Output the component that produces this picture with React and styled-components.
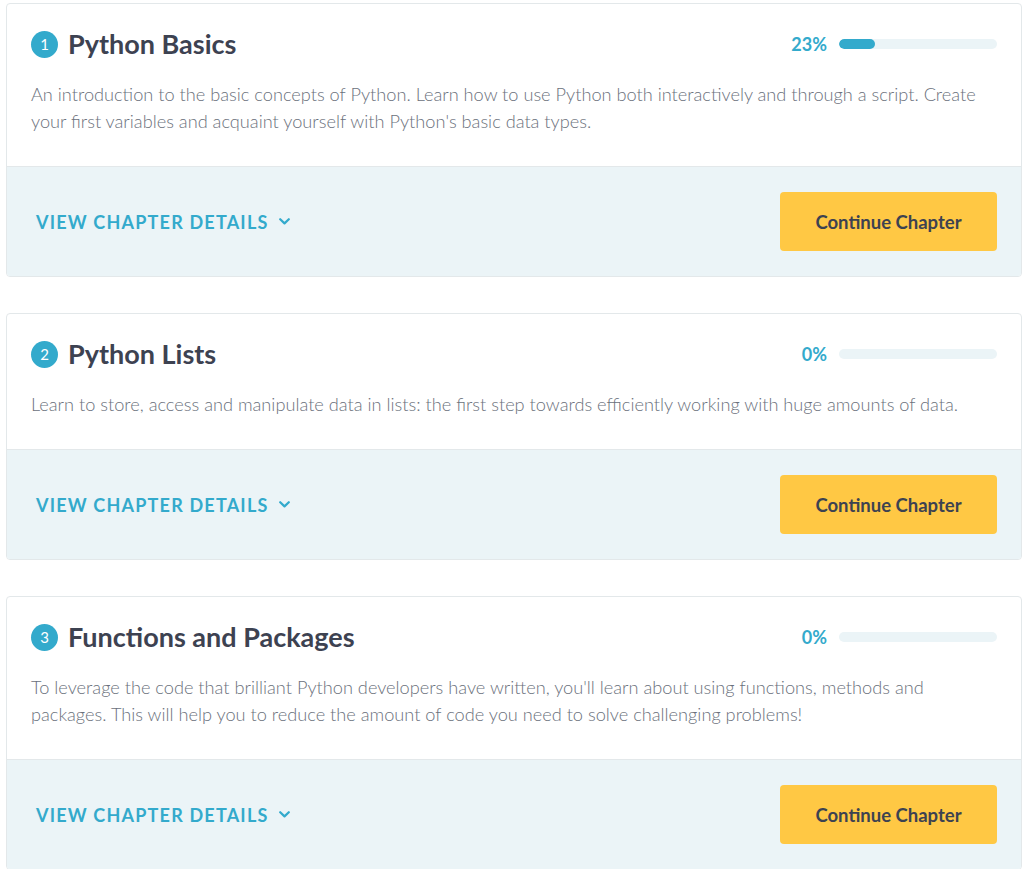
import React from 'react';
import styled, { createGlobalStyle } from 'styled-components';

const GlobalStyle = createGlobalStyle`
  body {
    margin: 0;
    background: #fff;
    font-family: Lato, "Open Sans", sans-serif;
  }
`;

const Page = styled.div`
  padding: 3px 11px 0 6px;
  display: flex;
  flex-direction: column;
  gap: 36px;
`;

const Card = styled.section`
  border: 1px solid #e3e8ea;
  border-radius: 4px;
  overflow: hidden;
  background: #fff;
`;

const Body = styled.div`
  padding: 24px 24px 31px 24px;
`;

const Header = styled.div`
  display: flex;
  align-items: center;
  justify-content: space-between;
`;

const TitleWrap = styled.div`
  display: flex;
  align-items: center;
  gap: 10px;
`;

const Number = styled.span`
  width: 27px;
  height: 27px;
  border-radius: 50%;
  background: #33aacc;
  color: #fff;
  font-size: 15px;
  font-weight: 400;
  display: flex;
  align-items: center;
  justify-content: center;
`;

const Title = styled.h4`
  margin: 0;
  font-size: 27px;
  line-height: 32px;
  font-weight: 700;
  color: #3d4251;
`;

const Progress = styled.div`
  display: flex;
  align-items: center;
  gap: 12px;
`;

const Percent = styled.span`
  font-size: 18px;
  font-weight: 700;
  color: #33aacc;
  min-width: 36px;
  text-align: right;
`;

const Track = styled.div`
  width: 158px;
  height: 10px;
  border-radius: 5px;
  background: #ebf4f7;
  overflow: hidden;
`;

const Fill = styled.div`
  height: 100%;
  border-radius: 5px;
  background: #33aacc;
`;

const Description = styled.p`
  margin: 21px 0 0;
  font-size: 18.2px;
  line-height: 27px;
  font-weight: 300;
  color: #6b717c;
`;

const Footer = styled.div`
  background: #ebf4f7;
  border-top: 1px solid #e3e8ea;
  padding: 25px 24px 25px 29px;
  display: flex;
  align-items: center;
  justify-content: space-between;
`;

const DetailsLink = styled.button`
  background: none;
  border: none;
  padding: 0;
  display: flex;
  align-items: center;
  gap: 10px;
  font-family: inherit;
  font-size: 18px;
  font-weight: 700;
  letter-spacing: 1.2px;
  text-transform: uppercase;
  color: #33aacc;
  cursor: pointer;
`;

const ContinueButton = styled.button`
  width: 217px;
  height: 59px;
  border: none;
  border-radius: 4px;
  background: #ffc844;
  color: #3d4251;
  font-family: inherit;
  font-size: 18.5px;
  font-weight: 700;
  cursor: pointer;
`;

const chapters = [
  {
    n: 1,
    title: 'Python Basics',
    progress: 23,
    text: "An introduction to the basic concepts of Python. Learn how to use Python both interactively and through a script. Create your first variables and acquaint yourself with Python's basic data types.",
  },
  {
    n: 2,
    title: 'Python Lists',
    progress: 0,
    text: 'Learn to store, access and manipulate data in lists: the first step towards efficiently working with huge amounts of data.',
  },
  {
    n: 3,
    title: 'Functions and Packages',
    progress: 0,
    text: "To leverage the code that brilliant Python developers have written, you'll learn about using functions, methods and packages. This will help you to reduce the amount of code you need to solve challenging problems!",
  },
];

function Chevron() {
  return (
    <svg width="11" height="7" viewBox="0 0 11 7" fill="none">
      <path d="M1.2 1.2 L5.5 5.4 L9.8 1.2" stroke="#33aacc" strokeWidth="2.2" strokeLinecap="round" strokeLinejoin="round" />
    </svg>
  );
}

function ChapterCard({ chapter }) {
  return (
    <Card>
      <Body>
        <Header>
          <TitleWrap>
            <Number>{chapter.n}</Number>
            <Title>{chapter.title}</Title>
          </TitleWrap>
          <Progress>
            <Percent>{chapter.progress}%</Percent>
            <Track>
              <Fill style={{ width: `${chapter.progress}%` }} />
            </Track>
          </Progress>
        </Header>
        <Description>{chapter.text}</Description>
      </Body>
      <Footer>
        <DetailsLink>
          View Chapter Details
          <Chevron />
        </DetailsLink>
        <ContinueButton>Continue Chapter</ContinueButton>
      </Footer>
    </Card>
  );
}

export default function App() {
  return (
    <>
      <GlobalStyle />
      <Page>
        {chapters.map(c => (
          <ChapterCard key={c.n} chapter={c} />
        ))}
      </Page>
    </>
  );
}
